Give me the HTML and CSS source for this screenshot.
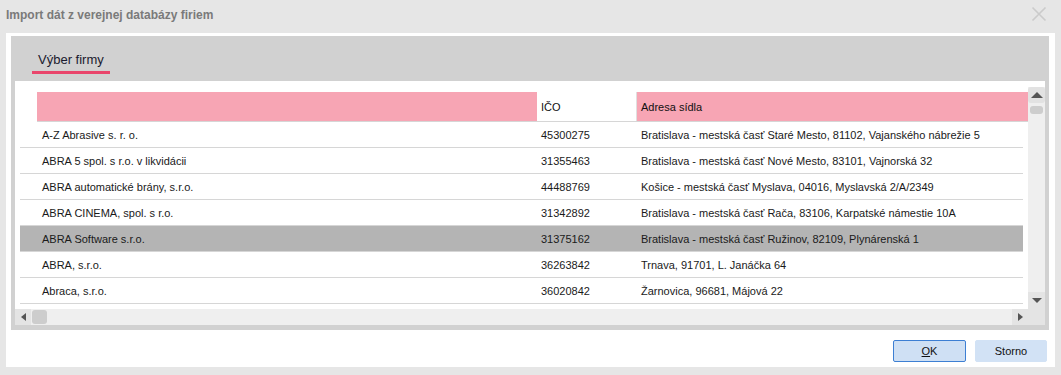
FILE: index.html
```html
<!DOCTYPE html>
<html lang="sk">
<head>
<meta charset="utf-8">
<title>Import dát z verejnej databázy firiem</title>
<link rel="stylesheet" href="styles.css">
</head>
<body>
<div class="titlebar">
  <span class="title">Import dát z verejnej databázy firiem</span>
  <svg class="close" width="16" height="16" viewBox="0 0 16 16"><path d="M1.5 1.5 L14.5 14.5 M14.5 1.5 L1.5 14.5" stroke="#cbcbcb" stroke-width="1.6" fill="none"/></svg>
</div>
<div class="dialog">
  <div class="panel">
    <div class="tabs"><div class="tab">Výber firmy</div></div>
    <div class="list">
      <div class="main">
        <div class="content">
          <div class="header">
            <div class="c1 h-pink"></div>
            <div class="c2">IČO</div>
            <div class="c3 h-pink">Adresa sídla</div>
          </div>
          <div class="row"><div class="c1">A-Z Abrasive s. r. o.</div><div class="c2">45300275</div><div class="c3">Bratislava - mestská časť Staré Mesto, 81102, Vajanského nábrežie 5</div></div>
          <div class="row"><div class="c1">ABRA 5 spol. s r.o. v likvidácii</div><div class="c2">31355463</div><div class="c3">Bratislava - mestská časť Nové Mesto, 83101, Vajnorská 32</div></div>
          <div class="row"><div class="c1">ABRA automatické brány, s.r.o.</div><div class="c2">44488769</div><div class="c3">Košice - mestská časť Myslava, 04016, Myslavská 2/A/2349</div></div>
          <div class="row"><div class="c1">ABRA CINEMA, spol. s r.o.</div><div class="c2">31342892</div><div class="c3">Bratislava - mestská časť Rača, 83106, Karpatské námestie 10A</div></div>
          <div class="row selected"><div class="c1">ABRA Software s.r.o.</div><div class="c2">31375162</div><div class="c3">Bratislava - mestská časť Ružinov, 82109, Plynárenská 1</div></div>
          <div class="row"><div class="c1">ABRA, s.r.o.</div><div class="c2">36263842</div><div class="c3">Trnava, 91701, L. Janáčka 64</div></div>
          <div class="row"><div class="c1">Abraca, s.r.o.</div><div class="c2">36020842</div><div class="c3">Žarnovica, 96681, Májová 22</div></div>
        </div>
        <div class="hscroll">
          <div class="hbtn"><span class="tri-left"></span></div>
          <div class="hthumb"></div>
          <div class="hspace"></div>
          <div class="hbtn right"><span class="tri-right"></span></div>
        </div>
      </div>
      <div class="vscroll">
        <div class="vtop"></div>
        <div class="vbtn up"><span class="tri-up"></span></div>
        <div class="vthumb"></div>
        <div class="vspace"></div>
        <div class="vbtn down"><span class="tri-down"></span></div>
        <div class="corner"></div>
      </div>
    </div>
  </div>
  <div class="footer">
    <button class="btn ok"><u>O</u>K</button>
    <button class="btn">Storno</button>
  </div>
</div>
</body>
</html>
```
FILE: styles.css
```css
html, body {
  margin: 0;
  padding: 0;
}
body {
  background: #e6e6e6;
  font-family: "Liberation Sans", Arial, sans-serif;
  font-size: 11px;
  color: #1e1e1e;
  width: 1061px;
  height: 375px;
  overflow: hidden;
}
.titlebar {
  height: 33px;
  display: flex;
  align-items: center;
  justify-content: space-between;
  padding: 0 14px 0 6px;
  box-sizing: border-box;
}
.title {
  font-weight: bold;
  font-size: 12px;
  color: #7a7a7a;
  margin-top: -3px;
}
.close {
  margin-top: -5px;
}
.dialog {
  margin: 0 6px;
  height: 334px;
  background: #fff;
  padding: 3px 6px 0 5px;
  box-sizing: border-box;
  display: flex;
  flex-direction: column;
}
.panel {
  background: #d1d1d1;
  height: 294px;
  padding: 0 4px 5px 4px;
  box-sizing: border-box;
  display: flex;
  flex-direction: column;
}
.tabs {
  height: 45px;
  display: flex;
  align-items: flex-end;
  padding-left: 17px;
}
.tab {
  font-size: 13px;
  color: #1a1a2e;
  padding: 0 6px 4px 6px;
  border-bottom: 3px solid #e9466c;
  margin-bottom: 7px;
}
.list {
  flex: 1;
  background: #fff;
  display: flex;
}
.main {
  flex: 1;
  display: flex;
  flex-direction: column;
}
.content {
  flex: 1;
  padding: 11px 5px 0 5px;
  overflow: hidden;
}
.header {
  display: flex;
  height: 29px;
  margin-left: 17px;
  margin-right: -5px;
  border-bottom: 1px solid #d6d6d6;
  align-items: stretch;
}
.header > div {
  display: flex;
  align-items: center;
  font-size: 11px;
  color: #111;
}
.h-pink {
  background: #f7a5b4;
}
.header .c1 {
  width: 500px;
  box-sizing: border-box;
}
.header .c2 {
  width: 100px;
  padding-left: 4px;
  box-sizing: border-box;
  border-right: 1px solid #e0e0e0;
}
.header .c3 {
  flex: 1;
  padding-left: 4px;
}
.row {
  display: flex;
  height: 25px;
  align-items: center;
  border-bottom: 1px solid #d6d6d6;
  color: #1a1a1a;
}
.row.selected {
  background: #b4b4b4;
}
.row .c1 {
  width: 517px;
  padding-left: 22px;
  box-sizing: border-box;
  white-space: nowrap;
}
.row .c2 {
  width: 100px;
  padding-left: 4px;
  box-sizing: border-box;
}
.row .c3 {
  flex: 1;
  padding-left: 4px;
  white-space: nowrap;
}
.hscroll {
  height: 16px;
  background: #efefef;
  display: flex;
}
.hbtn {
  width: 16px;
  background: #e4e4e4;
  display: flex;
  align-items: center;
  justify-content: center;
}
.hthumb {
  width: 15px;
  margin: 1px 0 1px 1px;
  background: #cdcdcd;
  border-radius: 3px;
}
.hspace {
  flex: 1;
}
.tri-left {
  width: 0; height: 0;
  border-top: 4px solid transparent;
  border-bottom: 4px solid transparent;
  border-right: 5px solid #555;
}
.tri-right {
  width: 0; height: 0;
  border-top: 4px solid transparent;
  border-bottom: 4px solid transparent;
  border-left: 5px solid #555;
}
.vscroll {
  width: 17px;
  display: flex;
  flex-direction: column;
  background: #efefef;
}
.vtop {
  height: 6px;
  background: #fff;
}
.vbtn {
  height: 16px;
  background: #e2e2e2;
  border-radius: 3px;
  display: flex;
  align-items: center;
  justify-content: center;
}
.vthumb {
  height: 8px;
  margin: 3px 2px 0 2px;
  background: #cdcdcd;
  border-radius: 3px;
}
.vspace {
  flex: 1;
}
.vbtn.down {
  border-radius: 0;
  background: #e4e4e4;
}
.corner {
  height: 17px;
  background: #e4e4e4;
}
.tri-up {
  width: 0; height: 0;
  border-left: 6px solid transparent;
  border-right: 6px solid transparent;
  border-bottom: 6px solid #555;
}
.tri-down {
  width: 0; height: 0;
  border-left: 5px solid transparent;
  border-right: 5px solid transparent;
  border-top: 5px solid #555;
}
.footer {
  flex: 1;
  display: flex;
  justify-content: flex-end;
  align-items: flex-start;
  padding-top: 10px;
  gap: 9px;
  padding-right: 2px;
}
.btn {
  font-family: "Liberation Sans", Arial, sans-serif;
  font-size: 11px;
  color: #111;
  width: 72px;
  height: 22px;
  background: #d2e2f5;
  border: 1px solid #d2e2f5;
  border-radius: 2px;
  padding: 0;
}
.btn.ok {
  width: 73px;
  border-color: #3d7fd3;
  background: #cfe0f4;
}
```
